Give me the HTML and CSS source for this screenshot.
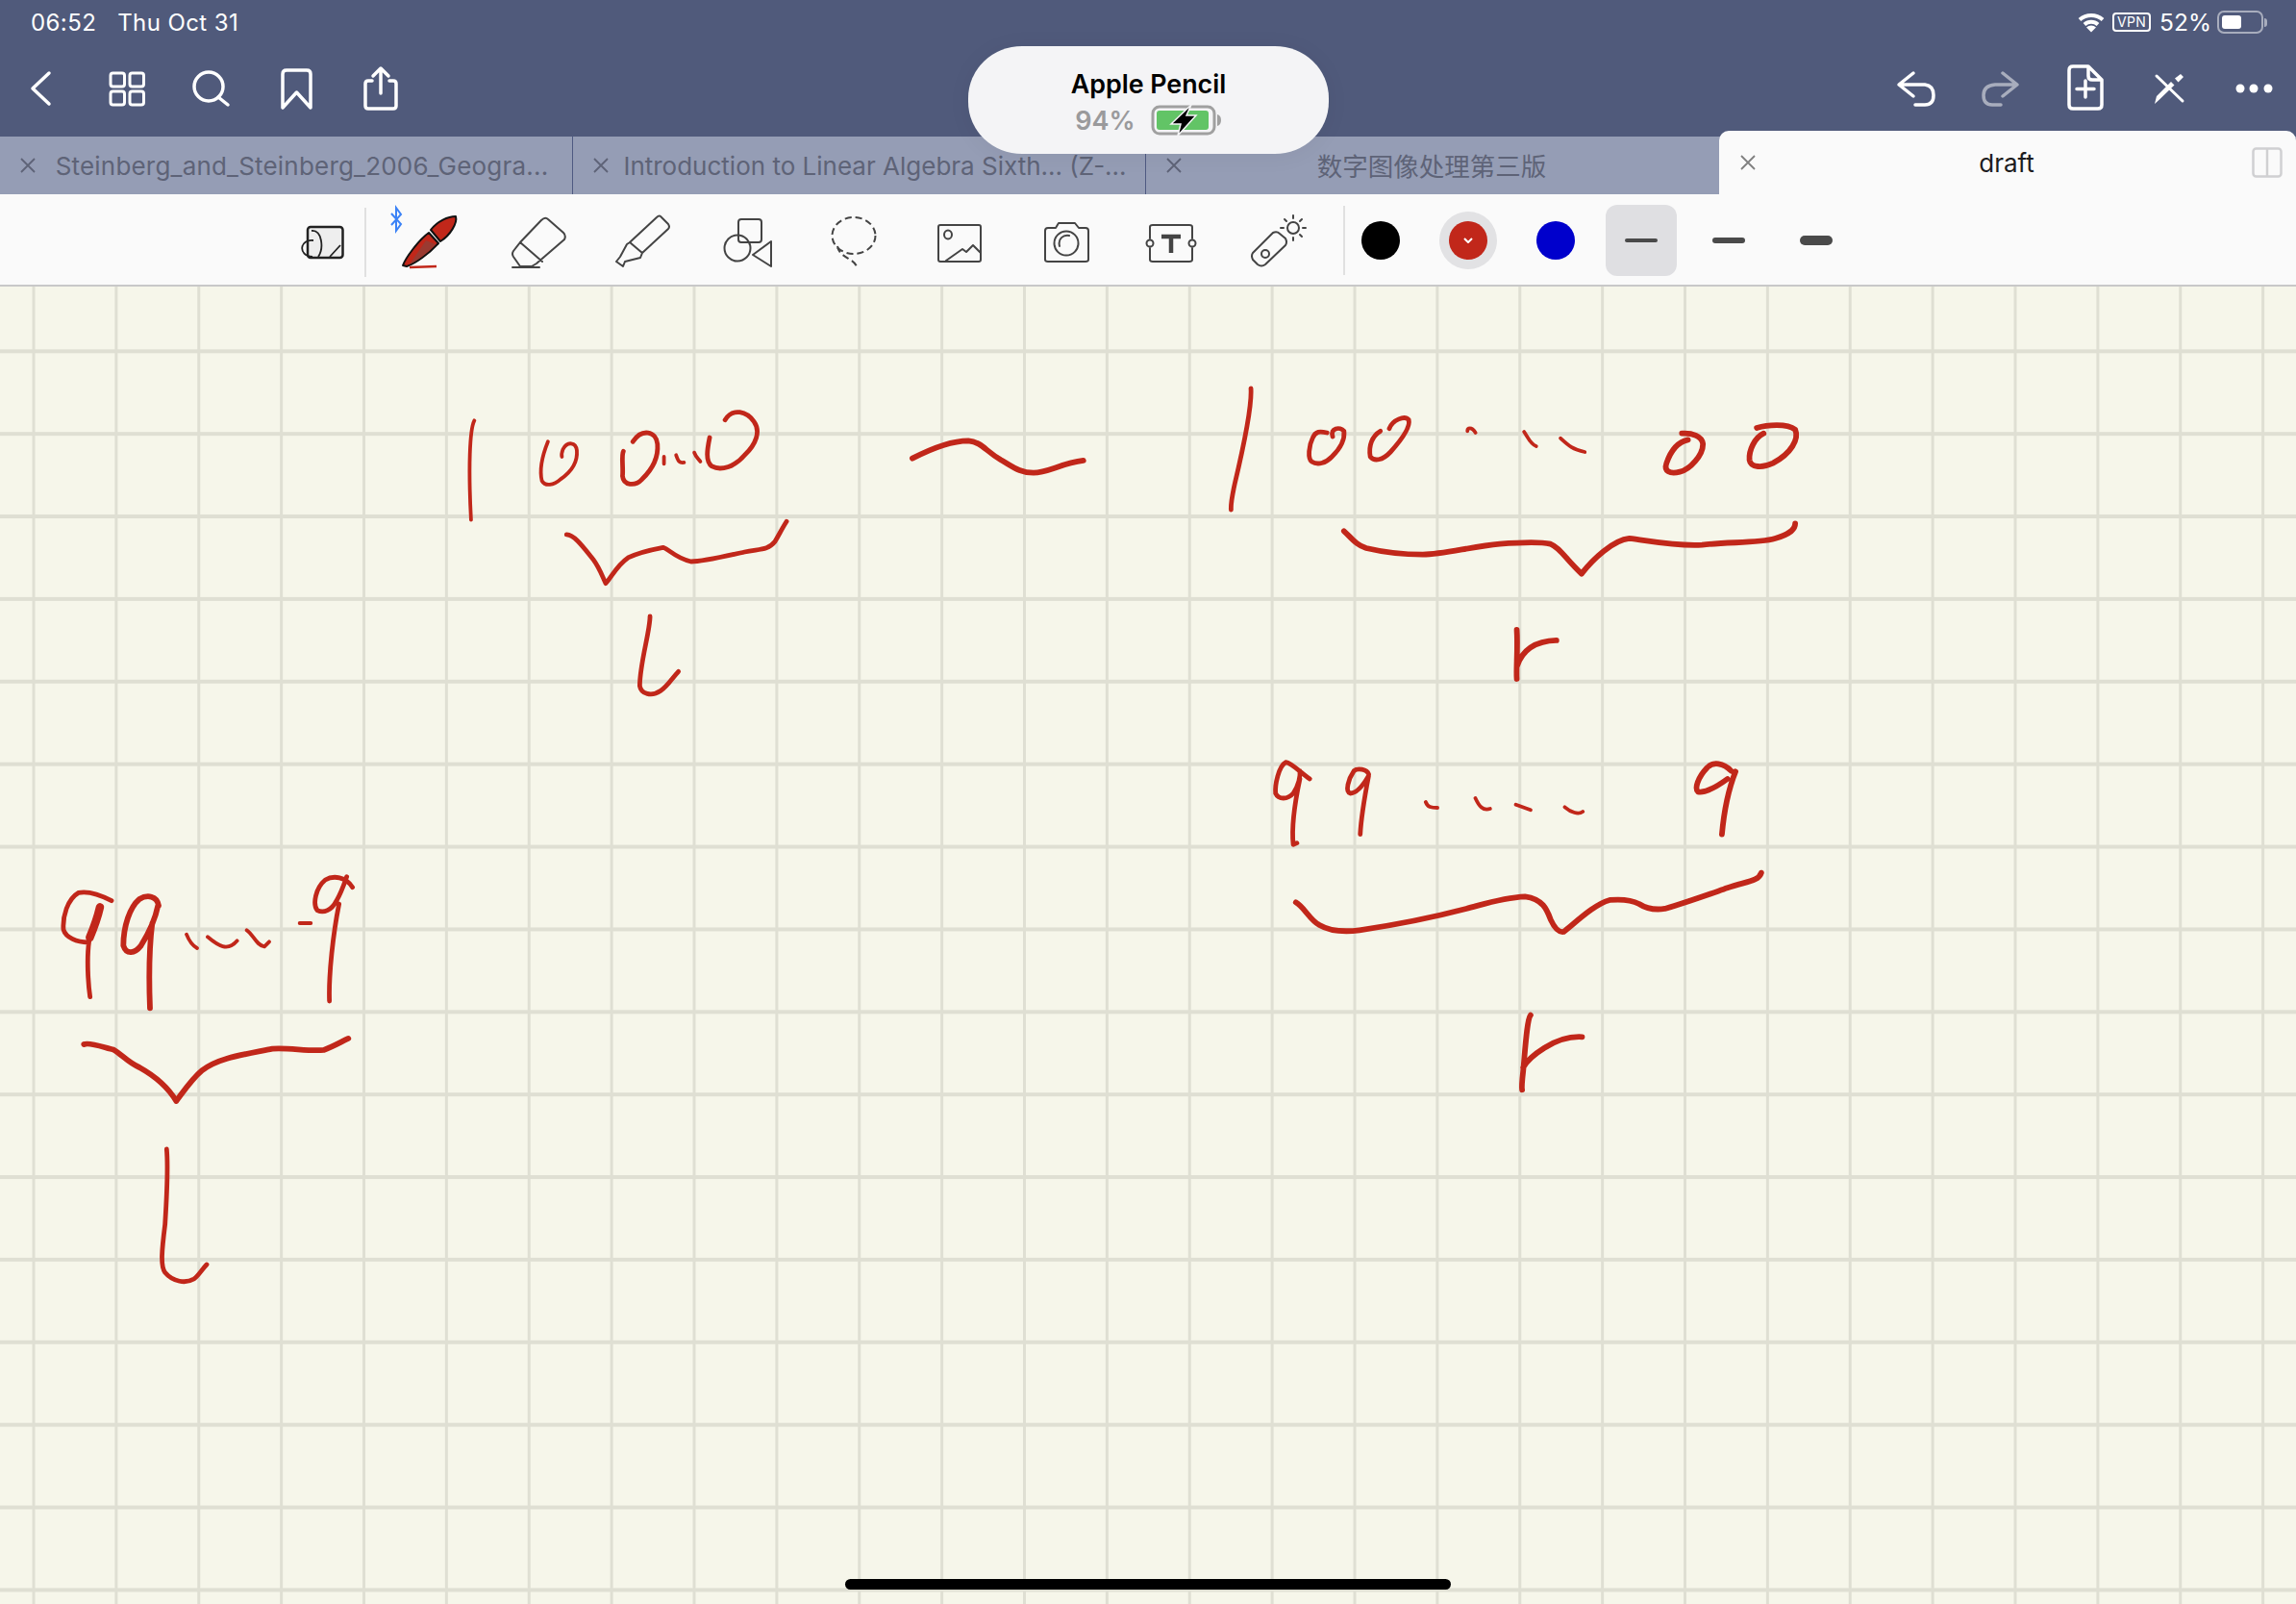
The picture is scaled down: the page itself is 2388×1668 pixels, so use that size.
FILE: index.html
```html
<!DOCTYPE html>
<html lang="en">
<head>
<meta charset="utf-8">
<title>draft</title>
<link rel="stylesheet" href="styles.css">
</head>
<body>
<div class="app">
  <header class="head">
    <div class="status">
      <div class="clock"><span>06:52</span><span>Thu Oct 31</span></div>
      <div class="sys">
        <svg class="wifi" viewBox="2162 12 28 24"><path class="wf" d="M2164 21.5 A18 18 0 0 1 2188 21.5"/><path class="wf" d="M2169 26.5 A10.5 10.5 0 0 1 2183 26.5"/><path class="wd" d="M2171 29.5 A7 7 0 0 1 2181 29.5 L2176 34.5 Z"/></svg>
        <span class="vpn">VPN</span>
        <span class="pct">52%</span>
        <span class="batt"><span class="batt-fill"></span></span>
        <span class="batt-nub"></span>
      </div>
    </div>
    <nav class="nav">
      <div class="nav-group">
        <svg class="nav-i" viewBox="0 46 88 96"><path class="wl" d="M51 76 L34 92 L51 108"/></svg>
        <svg class="nav-i" viewBox="88 46 88 96"><rect class="wl2" x="115" y="76" width="14.5" height="14" rx="2.5"/><rect class="wl2" x="135" y="76" width="14.5" height="14" rx="2.5"/><rect class="wl2" x="115" y="95" width="14.5" height="14" rx="2.5"/><rect class="wl2" x="135" y="95" width="14.5" height="14" rx="2.5"/></svg>
        <svg class="nav-i" viewBox="176 46 88 96"><ellipse class="wl" cx="217" cy="90" rx="15" ry="15"/><path class="wl" d="M227 101 L237 109"/></svg>
        <svg class="nav-i" viewBox="264 46 88 96"><path class="wl" d="M294 112 L294 77 Q294 73 298 73 L319 73 Q323 73 323 77 L323 112 L308.500 96 Z"/></svg>
        <svg class="nav-i" viewBox="352 46 88 96"><path class="wl" d="M387 84 L383 84 Q380 84 380 87 L380 110 Q380 113 383 113 L409 113 Q412 113 412 110 L412 87 Q412 84 409 84 L405 84"/><path class="wl" d="M396 97 L396 72 M388 79 L396 71 L404 79"/></svg>
      </div>
      <div class="nav-group">
        <svg class="nav-i" viewBox="1948 46 88 96"><path class="wl" d="M1990 76 L1975 88 L1990 100 M1976 88 L2002 88 Q2011 89 2011 99 Q2011 109 2002 109 L1992 109"/></svg>
        <svg class="nav-i dim" viewBox="2036 46 88 96"><path class="wl" d="M2083 76 L2098 88 L2083 100 M2097 88 L2075 88 Q2063 89 2063 99 Q2063 109 2072 109 L2081 109"/></svg>
        <svg class="nav-i" viewBox="2124 46 88 96"><path class="wl" d="M2172 69 L2156 69 Q2152 69 2152 73 L2152 109 Q2152 113 2156 113 L2182 113 Q2186 113 2186 109 L2186 83 Z M2172 69 L2172 79 Q2172 83 2176 83 L2186 83"/><path class="wl" d="M2169 84 L2169 101 M2160 92.500 L2178 92.500"/></svg>
        <svg class="nav-i" viewBox="2212 46 88 96"><path class="wl3" d="M2243 79 L2270 105"/><path class="wf2" d="M2241 108 L2243 100 L2258 85 L2261.500 88.500 L2246 103.500 Z M2262 81.500 L2268 77 L2271 80 L2265.500 85.500 Z"/></svg>
        <svg class="nav-i" viewBox="2300 46 88 96"><circle class="wd" cx="2330" cy="92" r="4.500"/><circle class="wd" cx="2344" cy="92" r="4.500"/><circle class="wd" cx="2359" cy="92" r="4.500"/></svg>
      </div>
    </nav>
  </header>

  <div class="tabs">
    <div class="tab tab-long">
      <svg class="x" viewBox="0 0 16 16"><path d="M1 1 L15 15 M15 1 L1 15"/></svg>
      <span class="tab-title">Steinberg_and_Steinberg_2006_Geogra...</span>
    </div>
    <div class="tab">
      <svg class="x" viewBox="0 0 16 16"><path d="M1 1 L15 15 M15 1 L1 15"/></svg>
      <span class="tab-title">Introduction to Linear Algebra Sixth... (Z-...</span>
    </div>
    <div class="tab tab-cjk">
      <svg class="x" viewBox="0 0 16 16"><path d="M1 1 L15 15 M15 1 L1 15"/></svg>
      <span class="tab-title">数字图像处理第三版</span>
    </div>
    <div class="tab tab-on">
      <svg class="x" viewBox="0 0 16 16"><path d="M1 1 L15 15 M15 1 L1 15"/></svg>
      <span class="tab-title">draft</span>
      <svg class="split" viewBox="0 0 32 32"><rect x="1.500" y="1.500" width="29" height="29" rx="3"/><path d="M16 1.500 L16 30.500"/></svg>
    </div>
  </div>

  <div class="tools">
    <svg class="tpl" viewBox="311 230 48 44"><rect class="tpl-page" x="320" y="236" width="36.500" height="32" rx="3"/><path class="tpl-line" d="M324 240 C335 239 337 258 331 267 M326 250 C312 248 309 266 325 267 M343 267 L354 255"/></svg>
    <span class="vline"></span>
    <div class="tool-row">
      <svg class="tool" viewBox="391 202 110 96">
        <path class="bt" d="M407 222 L417 233 L412 240 L412 216 L417 223 L407 234"/>
        <path class="pen-low" d="M419 276 C422 268 435 250 446 242 L456 253 C446 264 432 274 423 277 Z"/>
        <path class="pen-dark" d="M443 250 L453 254 C444 264 434 271 426 275 Z"/>
        <path class="pen-up" d="M448 239 C455 230 466 225 474 225 C476 232 468 245 458 251 Z"/>
        <path class="pen-ul" d="M426 278 L454 277"/>
      </svg>
      <svg class="tool" viewBox="501 202 110 96">
        <path class="tl" d="M541 252 L563 229 Q567 225 570 228 L586 242 Q589 245 587 249 L558 274 L553 277 L541 277 L534 267 Q532 264 534 261 Z M541 252 L564 272"/>
        <path class="tl" d="M533 278 L561 278"/>
      </svg>
      <svg class="tool" viewBox="611 202 110 96">
        <path class="tl" d="M655 252 L683 226 Q686 223 688 226 L695 233 Q697 236 695 238 L668 263 L666 268 L650 272 L648 277 L641 272 L645 267 L652 254 Z M655 252 L668 263"/>
      </svg>
      <svg class="tool" viewBox="721 202 110 96">
        <rect class="tl" x="768" y="228" width="24" height="24" rx="3"/>
        <ellipse class="tl" cx="767" cy="258" rx="13.500" ry="13.500"/>
        <path class="tl" d="M802 251 L783 265 L802 277 Z"/>
      </svg>
      <svg class="tool" viewBox="831 202 110 96">
        <ellipse class="tl dash" cx="888" cy="245" rx="22.500" ry="19"/>
        <path class="tl dash" d="M871 256 C873 268 887 268 891 277"/>
      </svg>
      <svg class="tool" viewBox="941 202 110 96">
        <rect class="tl" x="976" y="234" width="44" height="38" rx="2"/>
        <ellipse class="tl" cx="986" cy="244" rx="4" ry="4.500"/>
        <path class="tl" d="M984 271 L1001 259 L1005 262 L1012 255 L1020 263"/>
      </svg>
      <svg class="tool" viewBox="1051 202 110 96">
        <path class="tl" d="M1098 237 L1101 232 L1118 232 L1122 237 L1129 237 Q1132 237 1132 240 L1132 270 Q1132 272 1129 272 L1090 272 Q1087 272 1087 270 L1087 240 Q1087 237 1090 237 Z"/>
        <circle class="tl" cx="1109" cy="253" r="12.500"/>
        <path class="tl" d="M1102 256 C1100 248 1106 244 1112 245"/>
      </svg>
      <svg class="tool" viewBox="1161 202 110 96">
        <path class="tl" d="M1196 248 L1196 236 Q1196 234 1199 234 L1237 234 Q1240 234 1240 236 L1240 248 M1240 258 L1240 270 Q1240 272 1237 272 L1199 272 Q1196 272 1196 270 L1196 258"/>
        <circle class="tl" cx="1196" cy="253" r="3.500"/><circle class="tl" cx="1240" cy="253" r="3.500"/>
        <path class="tb" d="M1208 246 L1228 246 M1218 246 L1218 263"/>
      </svg>
      <svg class="tool" viewBox="1271 202 110 96">
        <path class="tl" d="M1303 263 L1324 242 Q1328 240 1331 243 L1337 248 Q1339 252 1337 255 L1316 275 Q1312 278 1308 275 L1303 270 Q1301 266 1303 263 Z"/>
        <circle class="tl" cx="1316" cy="264" r="4"/>
        <circle class="tl" cx="1345" cy="237" r="6"/>
        <path class="tl" d="M1345 224 L1345 227 M1345 247 L1345 250 M1332 237 L1335 237 M1355 237 L1358 237 M1336 228 L1338 230 M1352 244 L1354 246 M1354 228 L1352 230"/>
      </svg>
    </div>
    <span class="vline vline-b"></span>
    <div class="colors">
      <span class="swatch"><span class="dot dot-k"></span></span>
      <span class="swatch swatch-on"><span class="dot dot-r"><svg class="chev" viewBox="0 0 10 6"><path d="M1 1 L5 5 L9 1"/></svg></span></span>
      <span class="swatch"><span class="dot dot-b"></span></span>
    </div>
    <div class="widths">
      <span class="wbtn wbtn-on"><span class="bar bar-1"></span></span>
      <span class="wbtn"><span class="bar bar-2"></span></span>
      <span class="wbtn"><span class="bar bar-3"></span></span>
    </div>
  </div>

  <main class="paper">
    <svg class="ink" viewBox="0 298 2388 1370">
      <g transform="translate(440 380) scale(0.4847 0.3333)">
        <path class="w3" d="M110 172 C100 200 97 320 103 482"/>
        <path class="w3" d="M268 238 C255 285 250 330 255 360 C262 378 280 375 295 355 C320 330 332 300 330 265 C328 240 310 235 300 262 C298 270 297 280 298 285"/>
        <path class="w4" d="M430 268 C425 280 430 320 428 345 C430 375 455 378 470 355 C495 320 505 280 503 245 C500 205 470 195 450 238"/>
        <path class="w3" d="M517 285 L517 307 M543 280 C548 300 550 305 560 303 M582 272 C585 285 590 290 595 300"/>
        <path class="w4" d="M615 225 C610 260 605 300 620 315 C640 330 670 315 690 280 C715 245 725 205 710 175 C695 145 665 130 648 170"/>
        <path class="w5" d="M1050 290 C1090 260 1130 235 1170 235 C1200 240 1205 265 1240 295 C1265 315 1280 335 1310 335 C1340 335 1370 305 1417 297"/>
        <path class="w4" d="M308 528 C325 530 340 560 365 605 C380 635 385 660 392 680 C405 660 415 625 440 600 C460 585 490 575 515 568 C530 575 540 600 575 612 C600 612 650 595 690 582 C720 572 740 578 755 550 C765 525 772 505 780 487"/>
        <path class="w4" d="M487 783 C487 830 465 930 465 1000 C468 1025 490 1035 510 1015 C525 1000 535 975 548 955"/>
      </g>
      <g transform="translate(1240 380) scale(0.4209 0.3333)">
        <path class="w4" d="M145 72 C148 130 120 290 105 370 C98 410 95 430 96 450"/>
        <path class="w4" d="M333 210 C315 205 305 205 298 225 C288 250 285 290 295 300 C310 312 330 305 345 285 C365 260 378 235 375 205 C365 190 340 195 347 222"/>
        <path class="w4" d="M465 205 C445 220 435 250 440 285 C450 300 470 297 490 270 C515 235 540 195 535 170 C525 155 495 170 487 197"/>
        <path class="w3" d="M680 205 C680 195 690 190 700 210 M820 207 C830 225 835 245 850 252 M910 227 C930 250 940 262 970 270"/>
        <path class="w5" d="M1210 212 C1235 210 1260 220 1262 245 C1262 280 1230 325 1205 332 C1180 340 1165 330 1172 305 C1180 275 1195 240 1225 232"/>
        <path class="w5" d="M1395 195 C1420 185 1470 180 1490 200 C1500 230 1480 275 1435 305 C1410 320 1380 320 1377 295 C1375 265 1390 225 1412 212"/>
        <path class="w5" d="M375 517 C395 540 405 560 430 570 C470 582 510 590 570 590 C620 590 690 565 760 557 C810 552 860 550 885 557 C910 570 920 600 962 650 C990 605 1040 545 1080 540 C1120 545 1190 565 1260 560 C1320 550 1400 555 1440 540 C1480 525 1490 510 1490 493"/>
        <path class="w5" d="M802 825 C805 880 800 950 802 978 M802 940 C815 890 845 860 900 858"/>
      </g>
      <g transform="translate(1280 760) scale(0.3827 0.3333)">
        <path class="w4" d="M215 150 C190 130 165 100 150 98 C130 110 120 170 122 195 C130 215 155 215 170 195 C185 170 190 140 188 125 M188 150 C175 220 165 300 170 355 L180 350"/>
        <path class="w4" d="M375 135 C370 120 345 115 335 125 C320 150 310 190 325 195 C345 195 365 160 375 140 C365 200 355 260 352 323"/>
        <path class="w3" d="M530 222 C535 238 545 240 562 240 M665 210 C675 235 685 250 705 243 M775 230 L815 247 M908 238 C925 255 945 262 957 252"/>
        <path class="w5" d="M1360 125 C1340 100 1310 95 1295 115 C1270 145 1260 180 1270 190 C1290 195 1320 175 1350 150 M1372 127 C1350 190 1340 260 1335 323"/>
        <path class="w5" d="M177 535 C200 550 215 590 240 605 C270 625 310 628 350 622 C420 610 540 585 640 555 C690 540 740 520 800 517 C850 525 860 560 870 590 C880 615 890 630 905 627 C940 595 990 540 1030 528 C1060 525 1090 528 1110 540 C1130 555 1150 560 1180 555 C1240 535 1300 510 1350 490 C1400 470 1435 470 1442 443"/>
        <path class="w5" d="M815 887 C805 900 800 1000 795 1060 C792 1090 790 1110 792 1120 M795 1050 C810 1020 880 950 955 955"/>
      </g>
      <g transform="translate(30 880) scale(0.3333)">
        <path class="w4" d="M258 170 C220 150 180 140 155 145 C120 165 105 220 108 260 C115 285 150 300 185 300 M188 295 C180 350 185 430 191 470"/>
        <path class="w7" d="M222 190 C215 220 205 250 190 285"/>
        <path class="w5" d="M405 185 C400 155 370 150 345 165 C315 190 295 250 295 310 C305 340 330 335 350 310 C375 270 395 225 403 185 M385 240 C375 320 375 430 378 505"/>
        <path class="w3" d="M492 275 C500 295 510 310 525 318 M558 283 C590 310 620 330 650 295 M680 262 C700 275 710 310 735 313 L750 298 M845 240 L880 240"/>
        <path class="w4" d="M1010 128 C990 95 950 90 925 105 C895 130 885 180 900 200 C920 210 945 200 960 170 C975 145 985 115 992 95 M968 180 C950 270 935 400 938 483"/>
        <path class="w5" d="M172 618 C190 610 240 630 265 635 C290 650 310 675 345 690 C390 715 430 745 460 795 C490 755 510 725 540 700 C590 660 670 650 760 632 C810 628 870 640 920 636 C950 625 975 610 997 600"/>
        <path class="w4" d="M430 945 C435 1000 430 1100 425 1180 C415 1260 410 1310 425 1330 C450 1360 490 1365 515 1350 C530 1340 540 1320 555 1305"/>
      </g>
    </svg>
  </main>
</div>

<div class="pill">
  <div class="pill-name">Apple Pencil</div>
  <div class="pill-row">
    <span class="pill-pct">94%</span>
    <svg class="pill-batt" viewBox="1196 109 74 34">
      <rect class="pb-out" x="1198" y="112" width="64" height="28" rx="7"/>
      <rect class="pb-fill" x="1202" y="116" width="54" height="20" rx="3"/>
      <path class="pb-nub" d="M1265 120 Q1269 121 1269 126 Q1269 131 1265 132 Z"/>
      <path class="pb-bolt" d="M1238 110 L1217 130 L1227 130 L1224 142 L1243 121 L1233 121 Z"/>
    </svg>
  </div>
</div>
<div class="home"></div>
</body>
</html>
```

FILE: styles.css
```css
* { box-sizing: border-box; }
html, body { margin: 0; padding: 0; height: 100%; }
body { width: 2388px; height: 1668px; overflow: hidden; font-family: Inter, "Noto Sans CJK SC", sans-serif; background: #f6f6ea; }
.app { display: flex; flex-direction: column; height: 1668px; }

.head { background: #505a7b; height: 142px; color: #fff; flex: none; }
.status { height: 46px; display: flex; justify-content: space-between; align-items: center; padding: 0 30px 0 32px; }
.clock { display: flex; gap: 22px; font-size: 24px; letter-spacing: 0.4px; }
.sys { display: flex; align-items: center; }
.wifi { width: 28px; height: 24px; }
.wf { fill: none; stroke: #fff; stroke-width: 4; }
.wd { fill: #fff; }
.wf2 { fill: #fff; }
.vpn { margin-left: 8px; width: 40px; height: 20px; border: 2px solid #fff; border-radius: 4px; font-size: 14px; line-height: 16px; text-align: center; letter-spacing: 0.3px; }
.pct { margin-left: 9px; font-size: 24.500px; }
.batt { margin-left: 6px; width: 48px; height: 24px; border: 2px solid rgba(255,255,255,.5); border-radius: 7px; padding: 3px; display: block; }
.batt-fill { display: block; width: 20px; height: 14px; background: #fff; border-radius: 3px; }
.batt-nub { margin-left: 1px; width: 3px; height: 9px; background: rgba(255,255,255,.5); border-radius: 0 3px 3px 0; }

.nav { height: 96px; display: flex; justify-content: space-between; }
.nav-group { display: flex; }
.nav-i { width: 88px; height: 96px; }
.dim { opacity: .5; }
.wl { fill: none; stroke: #fff; stroke-width: 3.500; stroke-linecap: round; stroke-linejoin: round; }
.wl2 { fill: none; stroke: #fff; stroke-width: 3; }
.wl3 { fill: none; stroke: #fff; stroke-width: 3; stroke-linecap: round; }

.tabs { height: 60px; display: grid; grid-template-columns: 596px 596px 596px 1fr; background: #959db5; flex: none; }
.tab { display: flex; align-items: center; padding: 0 4px 0 21px; border-right: 1px solid #4f5a82; color: #5e6377; font-size: 26px; min-width: 0; }
.tab-long { letter-spacing: 0.200px; }
.tab-title { flex: 1; text-align: center; white-space: nowrap; overflow: hidden; }
.tab-cjk { padding-right: 39px; border-right: 0; font-family: "Noto Sans CJK SC", sans-serif; font-size: 26.500px; }
.tab-cjk .tab-title { position: relative; top: -1px; }
.x { width: 16px; height: 16px; flex: none; }
.x path { fill: none; stroke: #5e6377; stroke-width: 1.800; }
.tab-on { position: relative; margin-top: -6px; height: 66px; background: #fafafa; color: #1c1c1e; border-right: 0; border-radius: 10px 10px 0 0; padding: 0 14px 0 22px; }
.tab-on .x path { stroke: #808080; }
.tab-on .tab-title { padding-left: 6px; }
.split { width: 32px; height: 32px; flex: none; }
.split rect, .split path { fill: none; stroke: #d0d0d2; stroke-width: 2.500; }

.tools { height: 96px; flex: none; background: #fafafa; border-bottom: 2px solid #c8c8c8; display: flex; align-items: flex-start; padding-left: 311px; }
.tpl { width: 48px; height: 44px; margin-top: 28px; }
.tpl-page { fill: #eeeeee; stroke: #222; stroke-width: 2.500; }
.tpl-line { fill: none; stroke: #222; stroke-width: 1.800; }
.vline { width: 2px; height: 72px; background: #e0e0e0; margin: 14px 10px 0 20px; flex: none; }
.vline-b { margin: 12px 7px 0 16px; }
.tool-row { display: flex; }
.tool { width: 110px; height: 96px; flex: none; }
.tl { fill: none; stroke: #444; stroke-width: 2; stroke-linejoin: round; stroke-linecap: round; }
.dash { stroke-dasharray: 7 4; stroke-linecap: butt; }
.tb { fill: none; stroke: #444; stroke-width: 4.500; }
.bt { fill: none; stroke: #3b82f6; stroke-width: 2; }
.pen-low, .pen-up { fill: #c1271a; stroke: #111; stroke-width: 2; stroke-linejoin: round; }
.pen-dark { fill: #7a4a45; opacity: .55; }
.pen-ul { fill: none; stroke: #c1271a; stroke-width: 2.500; }

.colors { display: flex; gap: 31px; padding-top: 18px; }
.swatch { width: 60px; height: 60px; border-radius: 50%; display: flex; align-items: center; justify-content: center; }
.swatch-on { background: #e2e2e4; }
.dot { width: 40px; height: 40px; border-radius: 50%; display: flex; align-items: center; justify-content: center; }
.dot-k { background: #000; }
.dot-r { background: #c1271a; }
.dot-b { background: #0000cc; }
.chev { width: 10px; height: 6px; }
.chev path { fill: none; stroke: #fff; stroke-width: 2; }
.widths { display: flex; gap: 17px; margin-left: 22px; padding-top: 11px; }
.wbtn { width: 74px; height: 74px; border-radius: 12px; display: flex; align-items: center; justify-content: center; }
.wbtn-on { background: #dfdfe2; }
.bar { width: 34px; background: #4a4a4a; border-radius: 5px; }
.bar-1 { height: 4px; }
.bar-2 { height: 6px; }
.bar-3 { height: 10px; }

.paper { flex: 1; position: relative; overflow: hidden; background-color: #f6f6ea;
  background-image: linear-gradient(to right, #dfdfd3 3px, transparent 3px), linear-gradient(to bottom, #dfdfd3 3.500px, transparent 3.500px);
  background-size: 85.880px 85.880px;
  background-position: 33.500px 0, 0 65.300px; }
.ink { position: absolute; left: 0; top: 0; width: 2388px; height: 1370px; }
.ink path { fill: none; stroke: #c1271a; stroke-linecap: round; stroke-linejoin: round; vector-effect: non-scaling-stroke; }
.ink .w3 { stroke-width: 3.800; }
.ink .w4 { stroke-width: 4.800; }
.ink .w5 { stroke-width: 5.800; }
.ink .w7 { stroke-width: 8.500; }

.pill { position: absolute; left: 1007px; top: 48px; width: 375px; height: 112px; border-radius: 56px / 54px; background: #f4f4f6; box-shadow: 0 2px 24px rgba(0,0,0,.05); display: flex; flex-direction: column; align-items: center; }
.pill-name { margin-top: 23px; font-size: 26.800px; line-height: 32px; font-weight: 600; color: #000; }
.pill-row { display: flex; align-items: center; gap: 16px; margin-top: 5px; }
.pill-pct { font-size: 27px; font-weight: 600; color: #9a9a9c; }
.pill-batt { width: 74px; height: 34px; }
.pb-out { fill: none; stroke: #a0a0a0; stroke-width: 3; }
.pb-fill { fill: #62c466; }
.pb-nub { fill: #a0a0a0; }
.pb-bolt { fill: #000; stroke: #f4f4f6; stroke-width: 1.500; }
.home { position: absolute; left: 879px; top: 1642px; width: 630px; height: 11px; border-radius: 6px; background: #000; }
```
